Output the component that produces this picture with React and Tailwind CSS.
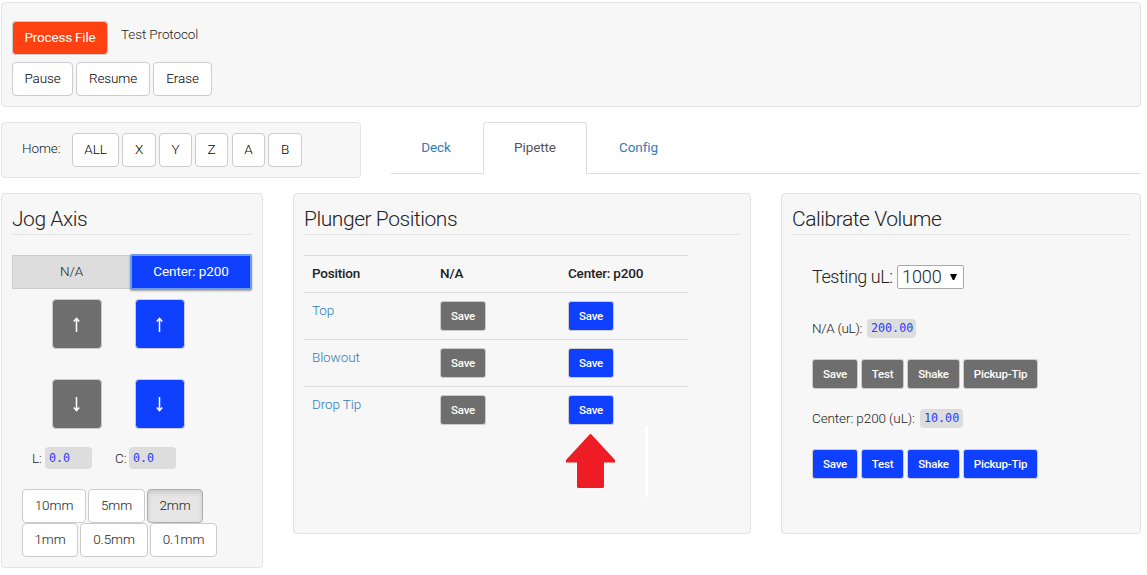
const WELL = "border border-[#e3e3e3] rounded bg-[#f7f7f7]";

function Btn({ className = "", children }) {
  return (
    <button
      className={`flex h-[34px] shrink-0 items-center justify-center whitespace-nowrap rounded border pb-[2px] ${className}`}
    >
      {children}
    </button>
  );
}

const WHITE = "border-[#ccc] bg-white text-black";

function SmallBtn({ blue, className = "w-[46px]", children }) {
  return (
    <button
      className={`flex h-[30px] shrink-0 items-center justify-center whitespace-nowrap rounded-[3px] border border-[#ccc] pt-px text-[11.5px] font-medium tracking-[-0.2px] text-white ${
        blue ? "bg-[#0f3fff]" : "bg-[#6e6e6e]"
      } ${className}`}
    >
      {children}
    </button>
  );
}

function Heading({ children }) {
  return (
    <h3 className="h-[31px] whitespace-nowrap border-b border-[#e3e3e3] text-[21px] font-light leading-[31px] tracking-[-0.45px] text-[#222]">
      {children}
    </h3>
  );
}

function ArrowBtn({ blue, down }) {
  return (
    <button
      className={`flex size-[50px] items-center justify-center rounded border border-[#ccc] pr-[2px] ${
        blue ? "bg-[#0f3fff]" : "bg-[#6e6e6e]"
      }`}
    >
      <svg width="7" height="15" viewBox="0 0 7 15" fill="none" stroke="#fff" strokeWidth="1.5" className={down ? "rotate-180" : ""}>
        <path d="M3.500 15V2M0.800 4.500L3.500 1.300L6.200 4.500" />
      </svg>
    </button>
  );
}

function Code({ className, children }) {
  return (
    <code
      className={`flex items-center rounded bg-[#ddd] px-1 pt-px font-['DejaVu_Sans_Mono',monospace] text-[11.7px] font-normal tracking-[0px] text-[#1f3cff] ${className}`}
    >
      {children}
    </code>
  );
}

function PlungerRow({ name }) {
  return (
    <div className="grid h-[47px] grid-cols-[128px_128px_1fr] border-t border-[#ddd] pl-2 pt-2">
      <a className="h-5 leading-[18px] text-[#337ab7]">{name}</a>
      <SmallBtn>Save</SmallBtn>
      <SmallBtn blue>Save</SmallBtn>
    </div>
  );
}

function VolumeButtons({ blue }) {
  return (
    <div className="flex">
      <SmallBtn blue={blue} className="w-[46px]">Save</SmallBtn>
      <SmallBtn blue={blue} className="ml-[3px] w-[43px]">Test</SmallBtn>
      <SmallBtn blue={blue} className="ml-[3px] w-[53px]">Shake</SmallBtn>
      <SmallBtn blue={blue} className="ml-[3px] w-[75px]">Pickup-Tip</SmallBtn>
    </div>
  );
}

export default function App() {
  return (
    <div className="h-[575px] w-[1147px] overflow-hidden bg-white pl-px pr-[6px] pt-[2px] font-['Roboto',sans-serif] text-[13.5px] font-light tracking-[-0.1px] text-[#222]">
      <header className={`h-[105px] pl-[10px] pt-[18px] ${WELL}`}>
        <div className="flex">
          <Btn className="w-24 border-[#ccc] bg-[#ff4010] font-normal tracking-[-0.2px] text-white">Process File</Btn>
          <span className="ml-[13px] mt-[3px] h-5 leading-5">Test Protocol</span>
        </div>
        <div className="mt-[7px] flex gap-[3px]">
          <Btn className={`w-[61px] ${WHITE}`}>Pause</Btn>
          <Btn className={`w-[74px] ${WHITE}`}>Resume</Btn>
          <Btn className={`w-[59px] ${WHITE}`}>Erase</Btn>
        </div>
      </header>

      <div className="mt-[15px] flex h-14">
        <div className={`flex w-[360px] pl-5 pt-[10px] ${WELL}`}>
          <span className="mt-[5px] w-[50px] leading-5">Home:</span>
          <div className="flex">
            <Btn className={`w-[47px] ${WHITE}`}>ALL</Btn>
            <Btn className={`ml-[3px] w-[34px] ${WHITE}`}>X</Btn>
            <Btn className={`ml-[3px] w-[33px] ${WHITE}`}>Y</Btn>
            <Btn className={`ml-[3px] w-[33px] ${WHITE}`}>Z</Btn>
            <Btn className={`ml-[4px] w-[33px] ${WHITE}`}>A</Btn>
            <Btn className={`ml-[3px] w-[34px] ${WHITE}`}>B</Btn>
          </div>
        </div>
        <nav className="ml-[30px] flex h-[52px] w-[750px] font-normal text-[#337ab7]">
          <a className="flex w-[92px] items-center justify-center border-b border-[#ddd] pr-[2px]">Deck</a>
          <a className="flex w-[104px] items-center justify-center rounded-t border border-b-0 border-[#ddd] pb-[2px] text-[#555]">Pipette</a>
          <a className="flex w-[103px] items-center justify-center border-b border-[#ddd]">Config</a>
          <span className="flex-1 border-b border-[#ddd]" />
        </nav>
      </div>

      <main className="mt-[15px] flex items-start gap-[30px]">
        <section className={`h-[375px] w-[262px] px-[10px] pt-[10px] ${WELL}`}>
          <Heading>Jog Axis</Heading>
          <div className="mt-[19px] flex h-9 items-start">
            <button className="mt-px h-[34px] w-[118px] border border-r-0 border-[#ccc] bg-[#ddd] pb-[2px]">N/A</button>
            <button className="h-9 w-[122px] rounded-[2px] border-2 border-[#6f9be8] bg-[#0f3fff] pb-[2px] font-normal text-white shadow-[0_1px_2px_rgba(0,0,0,0.35)]">
              Center: p200
            </button>
          </div>
          <div className="ml-10 mt-[9px] grid w-[133px] grid-cols-[50px_50px] gap-x-[33px] gap-y-[30px]">
            <ArrowBtn />
            <ArrowBtn blue />
            <ArrowBtn down />
            <ArrowBtn blue down />
          </div>
          <div className="ml-5 mt-[18px] flex h-[22px] items-center">
            <span className="w-[13px]">L:</span>
            <Code className="h-[22px] w-[47px]">0.0</Code>
            <span className="ml-[23px] w-[14px]">C:</span>
            <Code className="h-[22px] w-[47px]">0.0</Code>
          </div>
          <div className="ml-[10px] mt-5 flex gap-[2px]">
            <Btn className="w-16 border-[#ccc] bg-white">10mm</Btn>
            <Btn className="w-[57px] border-[#ccc] bg-white">5mm</Btn>
            <Btn className="w-14 border-[#adadad] bg-[#e6e6e6] shadow-[inset_0_3px_5px_rgba(0,0,0,0.125)]">2mm</Btn>
          </div>
          <div className="ml-[10px] flex gap-[2px]">
            <Btn className="w-14 border-[#ccc] bg-white">1mm</Btn>
            <Btn className="w-[68px] border-[#ccc] bg-white">0.5mm</Btn>
            <Btn className="w-[67px] border-[#ccc] bg-white">0.1mm</Btn>
          </div>
        </section>

        <section className={`relative h-[341px] w-[458px] pl-[10px] pr-[10px] pt-[10px] ${WELL}`}>
          <Heading>Plunger Positions</Heading>
          <div className="mt-5 w-[384px]">
            <div className="grid h-[37px] grid-cols-[128px_128px_1fr] border-t border-[#ddd] pl-2 font-medium leading-[34px] tracking-[-0.2px]">
              <span>Position</span>
              <span>N/A</span>
              <span>Center: p200</span>
            </div>
            <PlungerRow name="Top" />
            <PlungerRow name="Blowout" />
            <PlungerRow name="Drop Tip" />
          </div>
          <svg className="absolute left-[272px] top-[240px]" width="49" height="54" viewBox="0 0 49 54">
            <path d="M24 0H25L49 26V28.500H38V53L37 54H12L11 53V28.500H0V26Z" fill="#ee1c24" />
          </svg>
          <span className="absolute left-[351px] top-[232px] h-[71px] w-[3px] bg-white" />
        </section>

        <section className={`h-[341px] w-[360px] px-[10px] pt-[10px] ${WELL}`}>
          <Heading>Calibrate Volume</Heading>
          <div className="ml-5 mt-[30px] flex h-6 items-center text-[18px] font-light tracking-[-0.45px]">
            <span className="w-[85px] whitespace-nowrap pb-px">Testing uL:</span>
            <div className="flex h-6 w-[67px] items-center justify-between rounded-[2px] border border-[#a9a9a9] bg-white pl-1 pr-[6px]">
              <span className="pb-px tracking-[-0.1px]">1000</span>
              <svg width="7" height="6" viewBox="0 0 7 6">
                <path d="M0 0H7L4.200 6H2.800Z" fill="#000" />
              </svg>
            </div>
          </div>
          <div className="ml-5 mt-[30px] flex h-[19px] items-center">
            <span className="w-[55px] whitespace-nowrap tracking-[-0.3px]">N/A (uL):</span>
            <Code className="h-[19px] w-[49px]">200.00</Code>
          </div>
          <div className="ml-5 mt-[21px]">
            <VolumeButtons />
          </div>
          <div className="ml-5 mt-5 flex h-[19px] items-center">
            <span className="w-[108px] whitespace-nowrap">Center: p200 (uL):</span>
            <Code className="h-[19px] w-[43px]">10.00</Code>
          </div>
          <div className="ml-5 mt-[21px]">
            <VolumeButtons blue />
          </div>
        </section>
      </main>
    </div>
  );
}
